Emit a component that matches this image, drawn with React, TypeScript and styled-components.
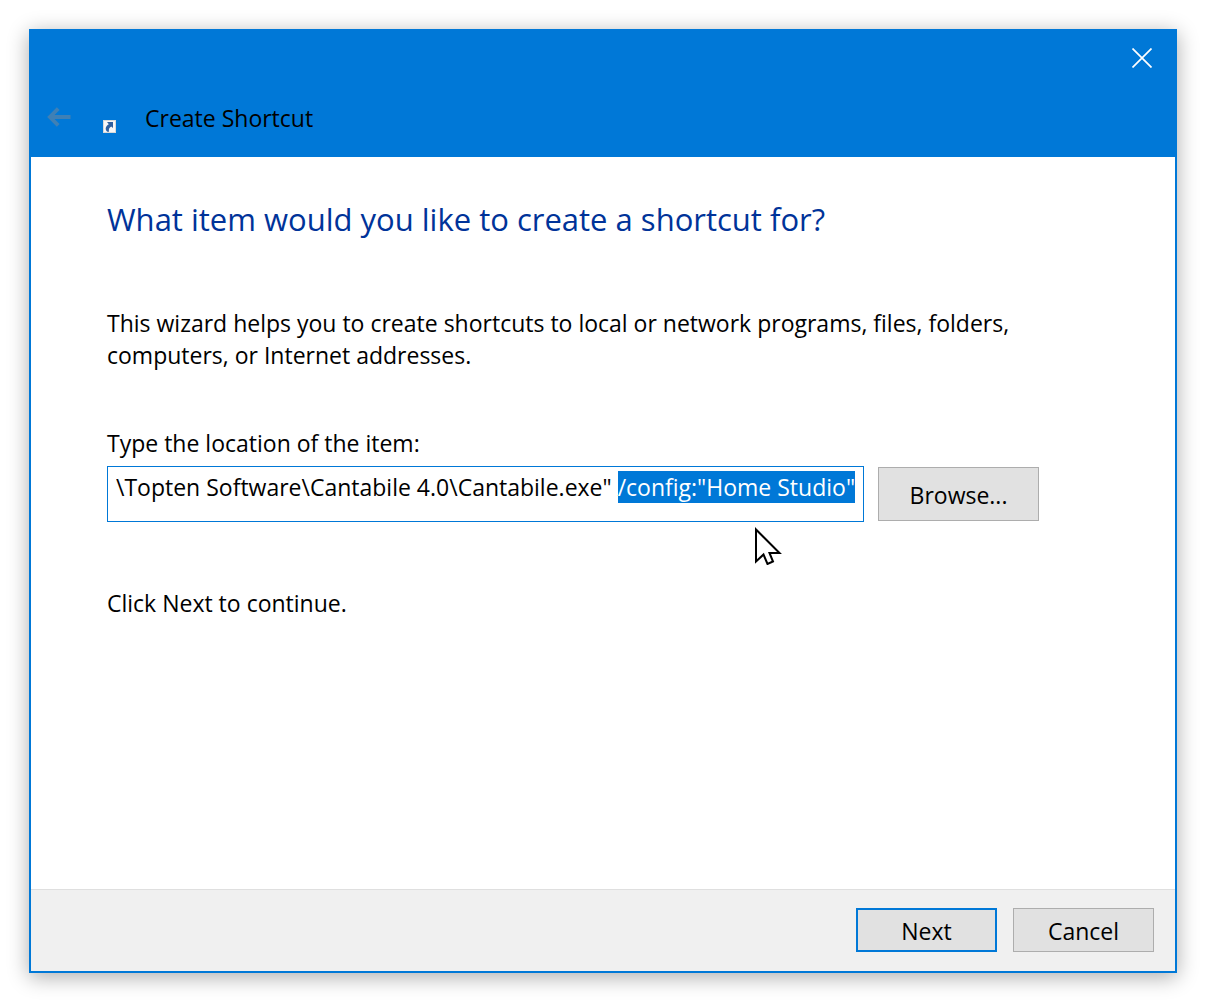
import { useEffect, useRef } from "react";
import styled, { createGlobalStyle } from "styled-components";

const accent = "#0078d7";

const GlobalStyle = createGlobalStyle`
  *, *::before, *::after { box-sizing: border-box; }
  body { margin: 0; background: #fff; }
  body, button, input {
    font-family: "Segoe UI", "Open Sans", "Noto Sans", sans-serif;
    font-size: 23px;
    line-height: 32px;
    color: #000;
  }
`;

const Desktop = styled.div`
  display: flex;
  min-height: 100vh;
  padding: 29px 36px 35px 29px;
`;

const Dialog = styled.main`
  flex: 1;
  display: flex;
  flex-direction: column;
  border: 2px solid ${accent};
  background: #fff;
  box-shadow: 0 4px 20px rgba(0, 0, 0, 0.33);
`;

const TitleBar = styled.header`
  display: flex;
  flex-direction: column;
  height: 126px;
  background: ${accent};
`;

const CloseButton = styled.button`
  align-self: flex-end;
  display: grid;
  place-items: center;
  width: 66px;
  height: 54px;
  padding: 0;
  border: 0;
  background: transparent;
`;

const TitleRow = styled.div`
  display: flex;
  align-items: center;
  height: 66px;
  padding-left: 15px;
`;

const BackButton = styled.button`
  display: grid;
  place-items: center;
  width: 26px;
  height: 26px;
  margin-bottom: 2px;
  padding: 0;
  border: 0;
  background: transparent;
`;

const ShortcutIcon = styled.svg`
  margin: 16px 29px 0 31px;
`;

const Title = styled.span`
  font-size: 23px;
`;

const Body = styled.section`
  flex: 1;
  padding: 40px 136px 40px 76px;
`;

const Heading = styled.h1`
  margin: 0 0 66px;
  font-size: 31px;
  line-height: 44px;
  font-weight: 400;
  color: #003399;
`;

const Paragraph = styled.p`
  margin: 0;
`;

const Field = styled.form`
  margin: 56px 0 65px;
`;

const FieldLabel = styled.label`
  display: block;
  margin-bottom: 7px;
`;

const FieldRow = styled.div`
  position: relative;
  display: flex;
  align-items: center;
  gap: 14px;
`;

const LocationInput = styled.input`
  flex: 1;
  min-width: 0;
  height: 56px;
  padding: 0 8px 15px;
  border: 1px solid ${accent};
  border-radius: 0;
  outline: 0;
  background: #fff;

  &::selection {
    background: ${accent};
    color: #fff;
  }
`;

const PushButton = styled.button<{ $width: number; $height: number; $primary?: boolean }>`
  width: ${(p) => p.$width}px;
  height: ${(p) => p.$height}px;
  padding: 2px 0 0;
  border: ${(p) => (p.$primary ? `2px solid ${accent}` : "1px solid #adadad")};
  background: #e1e1e1;
`;

const Pointer = styled.svg`
  position: absolute;
  top: 61px;
  right: 257px;
  pointer-events: none;
`;

const Footer = styled.footer`
  display: flex;
  justify-content: flex-end;
  gap: 16px;
  padding: 18px 21px 19px;
  border-top: 1px solid #dfdfdf;
  background: #f0f0f0;
`;

const leading = '\\Topten Software\\Cantabile 4.0\\Cantabile.exe" ';
const option = '/config:"Home Studio"';

export default function App() {
  const input = useRef<HTMLInputElement>(null);

  useEffect(() => {
    input.current?.focus();
    input.current?.setSelectionRange(leading.length, leading.length + option.length);
  }, []);

  return (
    <>
      <GlobalStyle />
      <Desktop>
        <Dialog>
          <TitleBar>
            <CloseButton type="button" aria-label="Close">
              <svg width="20" height="20" viewBox="0 0 20 20" fill="none" stroke="#fff" strokeWidth="1.7">
                <path d="M.5.5l19 19M19.5.5l-19 19" />
              </svg>
            </CloseButton>
            <TitleRow>
              <BackButton type="button" aria-label="Back" disabled>
                <svg width="24" height="20" viewBox="0 0 24 20" fill="none" stroke="#3f80b5" strokeWidth="3.8">
                  <path d="M23.5 10H3M11.2 1.7L2.900 10l8.300 8.300" />
                </svg>
              </BackButton>
              <ShortcutIcon width="13" height="13" viewBox="0 0 13 13" aria-hidden="true">
                <rect width="13" height="13" fill="#d9d9d9" />
                <rect x="1" y="1" width="11" height="11" fill="#f7f7f7" />
                <path d="M4 2h6v6L8.200 6.600C6.200 7.800 5.500 9.200 6 11.800H4.400C1.800 9.400 2.200 6.400 5.800 4.200z" fill="#2f5f9f" />
              </ShortcutIcon>
              <Title>Create Shortcut</Title>
            </TitleRow>
          </TitleBar>
          <Body>
            <Heading>What item would you like to create a shortcut for?</Heading>
            <Paragraph>
              This wizard helps you to create shortcuts to local or network programs, files, folders, computers, or
              Internet addresses.
            </Paragraph>
            <Field onSubmit={(e) => e.preventDefault()}>
              <FieldLabel htmlFor="location">Type the location of the item:</FieldLabel>
              <FieldRow>
                <LocationInput
                  id="location"
                  ref={input}
                  type="text"
                  spellCheck={false}
                  autoComplete="off"
                  defaultValue={leading + option}
                />
                <PushButton type="button" $width={161} $height={54}>
                  Browse...
                </PushButton>
                <Pointer width="28" height="38" viewBox="0 0 28 38" aria-hidden="true">
                  <path
                    d="M2 2.500V34.500L9.500 27.500L13.500 37L19 34.500L15.500 26H25.500z"
                    fill="#fff"
                    stroke="#000"
                    strokeWidth="2"
                  />
                </Pointer>
              </FieldRow>
            </Field>
            <Paragraph>Click Next to continue.</Paragraph>
          </Body>
          <Footer>
            <PushButton type="button" $width={141} $height={44} $primary>
              Next
            </PushButton>
            <PushButton type="button" $width={141} $height={44}>
              Cancel
            </PushButton>
          </Footer>
        </Dialog>
      </Desktop>
    </>
  );
}
